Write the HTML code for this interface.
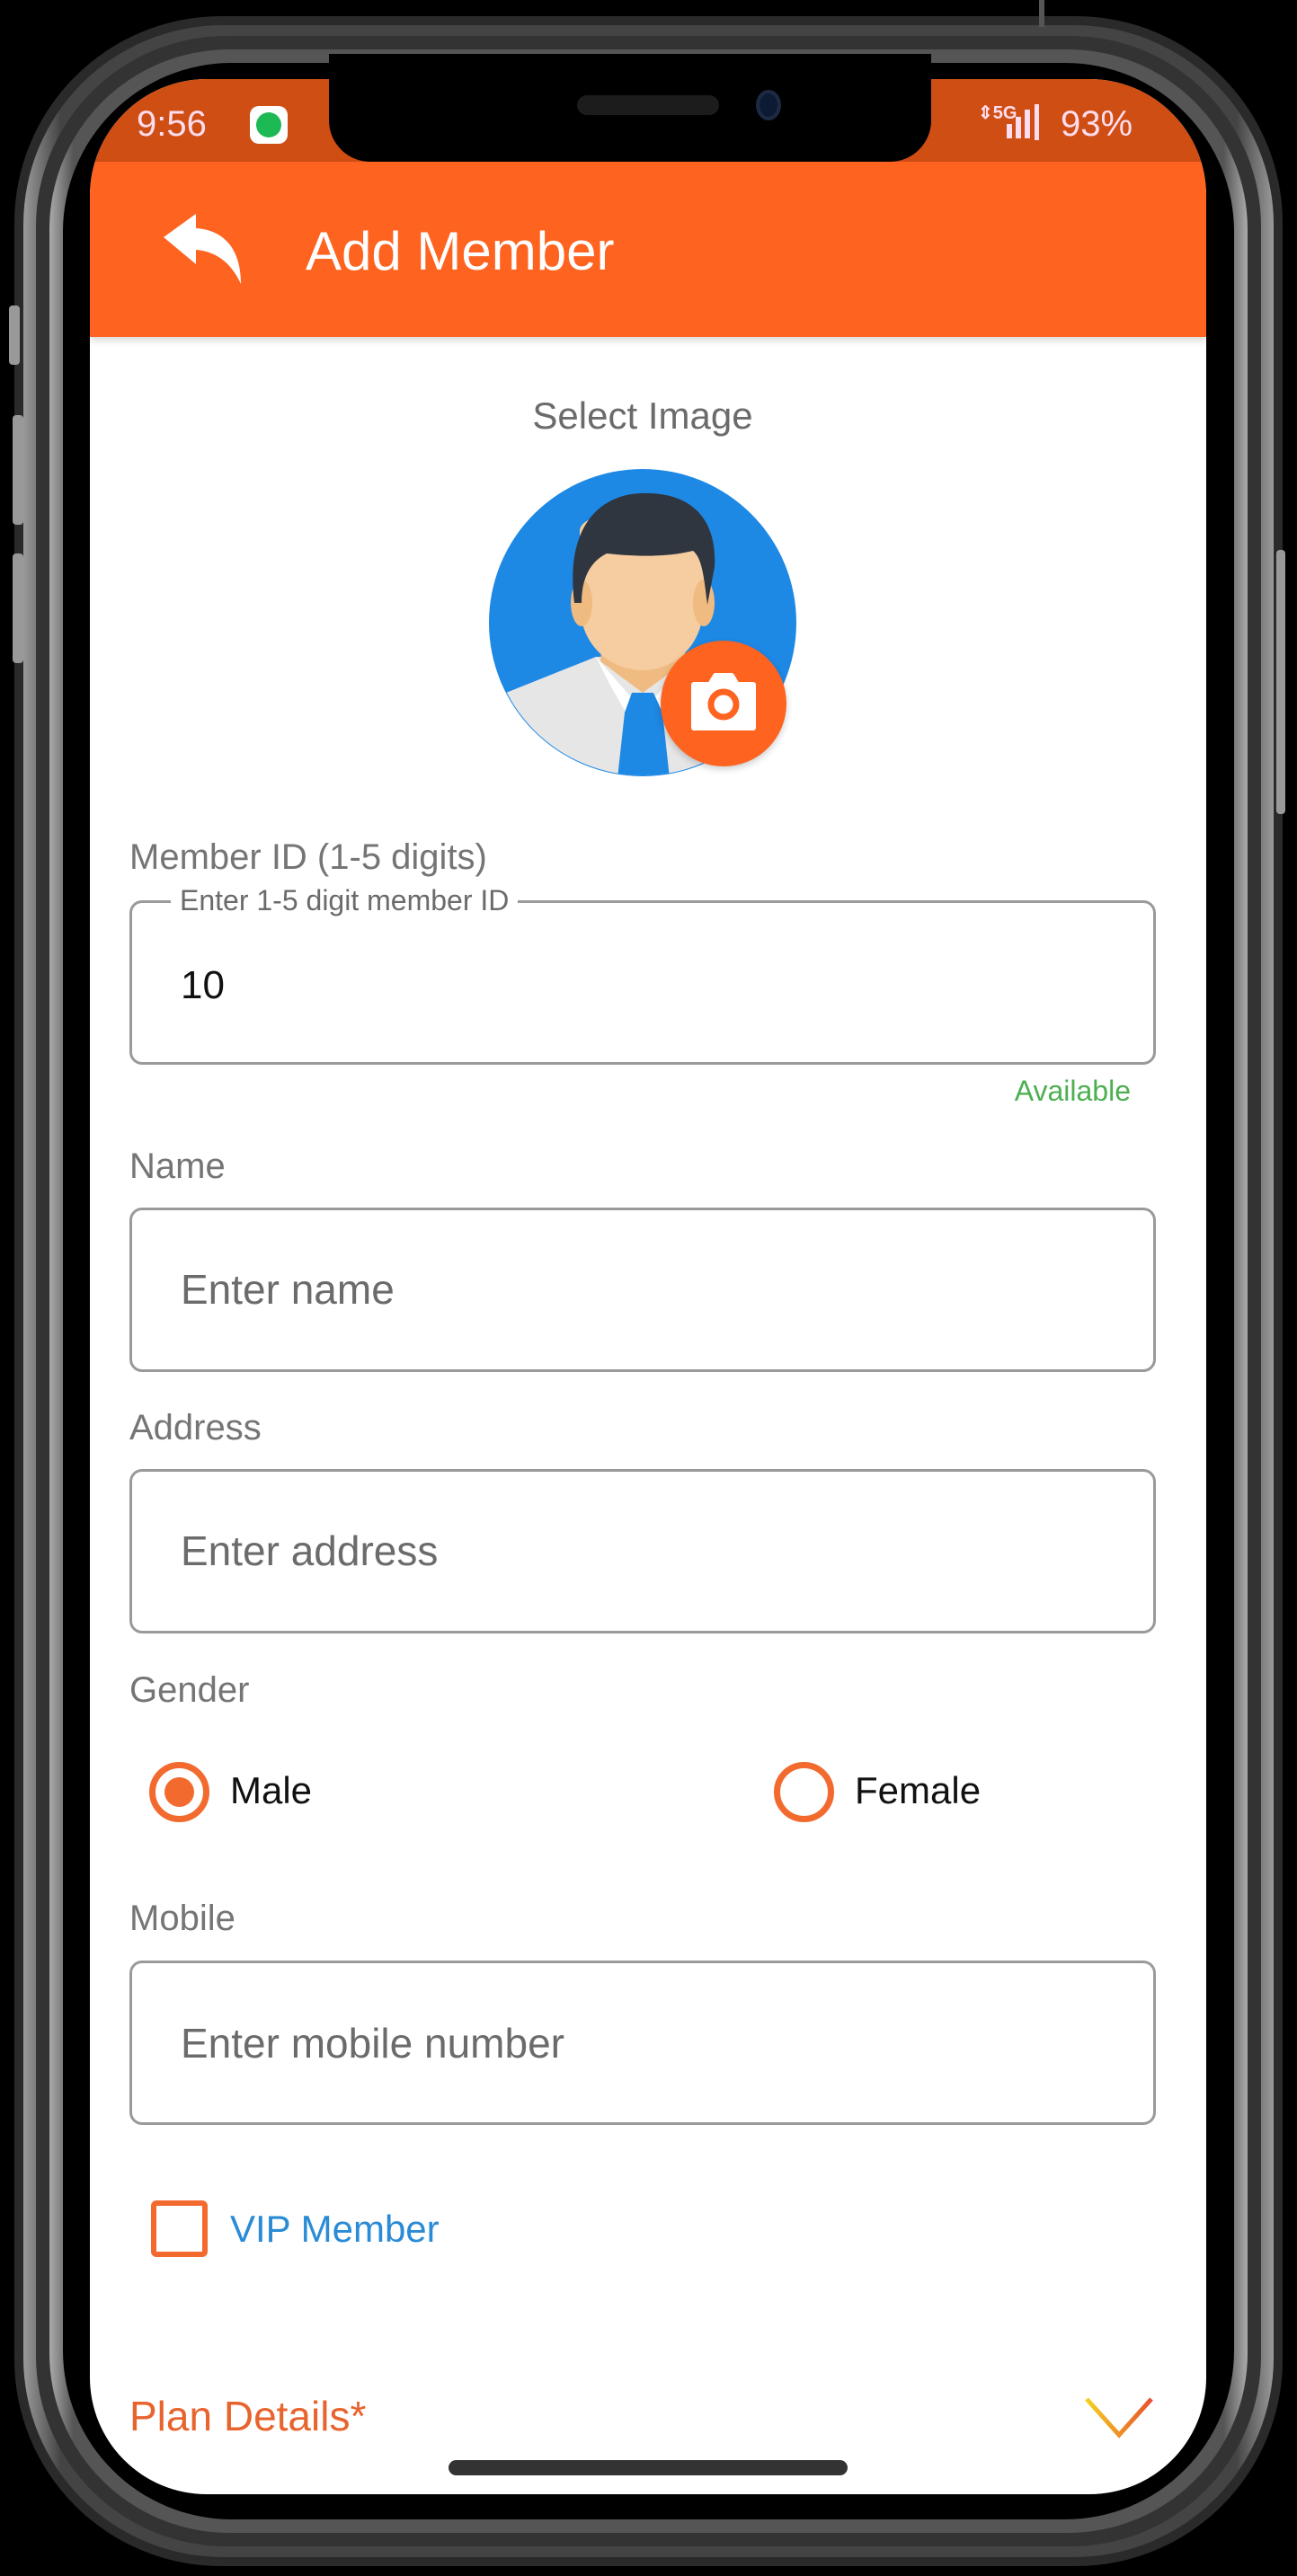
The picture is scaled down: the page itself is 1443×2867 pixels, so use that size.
<!DOCTYPE html>
<html><head><meta charset="utf-8"><style>
*{margin:0;padding:0;box-sizing:border-box}
html,body{width:1443px;height:2867px;background:#000;overflow:hidden;font-family:"Liberation Sans",Roboto,sans-serif}
.a{position:absolute}
.t{position:absolute;white-space:nowrap;line-height:1}
.box{position:absolute;left:144px;width:1142px;height:183px;border:3px solid #9a9a9a;border-radius:14px}
.lbl{color:#757575;font-size:40px;left:144px}
.ph{color:#6b6b6b;font-size:46px;left:201px}
</style></head><body>
<div class="a" style="left:16px;top:18px;width:1411px;height:2838px;border-radius:230px;background:#2a2a2a"></div>
<div class="a" style="left:26px;top:28px;width:1391px;height:2818px;border-radius:222px;background:linear-gradient(90deg,#9a9a9a,#444 3%,#444 97%,#9a9a9a)"></div>
<div class="a" style="left:40px;top:40px;width:1363px;height:2794px;border-radius:212px;background:#333"></div>
<div class="a" style="left:55px;top:55px;width:1333px;height:2764px;border-radius:200px;background:linear-gradient(90deg,#aaa,#555 2%,#555 98%,#aaa)"></div>
<div class="a" style="left:70px;top:70px;width:1303px;height:2734px;border-radius:188px;background:#000"></div>
<div class="a" style="left:10px;top:340px;width:12px;height:66px;border-radius:4px;background:#999"></div>
<div class="a" style="left:14px;top:462px;width:12px;height:122px;border-radius:4px;background:#999"></div>
<div class="a" style="left:14px;top:616px;width:12px;height:122px;border-radius:4px;background:#999"></div>
<div class="a" style="left:1420px;top:612px;width:10px;height:294px;border-radius:4px;background:#999"></div>
<div class="a" style="left:1156px;top:0;width:6px;height:30px;background:#555"></div>
<div class="a" style="left:100px;top:88px;width:1242px;height:2688px;border-radius:130px;background:#fff;overflow:hidden">
  <div class="a" style="left:0;top:0;width:1242px;height:92px;background:#cf4e14"></div>
  <div class="a" style="left:0;top:92px;width:1242px;height:195px;background:#fe6320;box-shadow:0 4px 8px rgba(0,0,0,.15)"></div>
</div>
<div class="a" style="left:366px;top:60px;width:670px;height:120px;background:#000;border-radius:0 0 46px 46px"></div>
<div class="a" style="left:642px;top:106px;width:158px;height:22px;border-radius:11px;background:#1c1c1c"></div>
<div class="a" style="left:841px;top:100px;width:28px;height:34px;border-radius:50%;background:#0d1a33;border:4px solid #1d2a44"></div>
<div class="t" style="left:152px;top:118px;font-size:40px;color:#fde">9:56</div>
<div class="a" style="left:278px;top:118px;width:42px;height:42px;border-radius:10px;background:#fff"><div class="a" style="left:7px;top:7px;width:28px;height:28px;border-radius:50%;background:#1db954"></div></div>
<div class="t" style="left:1088px;top:116px;font-size:20px;color:#fde;font-weight:bold">⇕5G</div>
<div class="a" style="left:1120px;top:138px;width:6px;height:16px;background:#fde"></div>
<div class="a" style="left:1130px;top:130px;width:6px;height:24px;background:#fde"></div>
<div class="a" style="left:1140px;top:122px;width:6px;height:32px;background:#fde"></div>
<div class="a" style="left:1151px;top:116px;width:5px;height:40px;background:#fde"></div>
<div class="t" style="left:1180px;top:118px;font-size:40px;color:#fde">93%</div>
<svg class="a" style="left:180px;top:238px" width="95" height="80" viewBox="0 0 95 80"><path d="M2 26 L38 0 L38 16 C70 18 88 40 88 78 C78 56 62 42 38 40 L38 56 Z" fill="#fff"/></svg>
<div class="t" style="left:340px;top:250px;font-size:60px;color:#fff">Add Member</div>
<div class="t" style="left:0;width:1430px;text-align:center;top:442px;font-size:42px;color:#6b6b6b">Select Image</div>
<svg class="a" style="left:543px;top:521px" width="345" height="345" viewBox="0 0 345 345">
<defs><clipPath id="c"><circle cx="172" cy="172" r="170"/></clipPath></defs>
<circle cx="172" cy="172" r="171" fill="#1e88e5"/>
<g clip-path="url(#c)">
<path d="M20 250 L120 210 L225 210 L330 250 L345 345 L0 345 Z" fill="#e6e6e6"/>
<path d="M120 210 L172 270 L225 210 L215 240 L175 310 L135 240Z" fill="#fff"/>
<path d="M130 160 L215 160 L220 215 L172 250 L125 215 Z" fill="#f0bb80"/>
<path d="M160 250 L184 250 L194 272 L202 345 L144 345 L152 272 Z" fill="#1e88e5"/>
</g>
<path d="M102 70 C102 40 240 40 240 70 L240 150 C240 200 205 225 172 225 C139 225 102 200 102 150 Z" fill="#f6cda0"/>
<ellipse cx="104" cy="150" rx="12" ry="26" fill="#f0bb80"/><ellipse cx="240" cy="150" rx="12" ry="26" fill="#f0bb80"/>
<path d="M96 150 C86 70 120 30 170 28 C225 26 255 55 252 110 L244 152 C240 120 238 100 228 92 C195 100 160 98 132 95 C112 105 104 125 104 150 Z" fill="#2f3640"/>
</svg>
<div class="a" style="left:735px;top:713px;width:140px;height:140px;border-radius:50%;background:#fe6320;box-shadow:0 3px 8px rgba(0,0,0,.2)"></div>
<svg class="a" style="left:768px;top:748px" width="74" height="66" viewBox="0 0 74 66"><path d="M4 14 H22 L28 4 H46 L52 14 H70 V62 H4 Z" fill="#fff" stroke="#fff" stroke-width="6" stroke-linejoin="round"/><circle cx="37" cy="36" r="14" fill="none" stroke="#fe6320" stroke-width="7"/></svg>
<div class="t lbl" style="top:934px">Member ID (1-5 digits)</div>
<div class="box" style="top:1002px"></div>
<div class="t" style="left:190px;top:986px;font-size:32px;color:#6b6b6b;background:#fff;padding:0 10px">Enter 1-5 digit member ID</div>
<div class="t" style="left:201px;top:1075px;font-size:44px;color:#111">10</div>
<div class="t" style="right:185px;top:1198px;font-size:32px;color:#4caf50">Available</div>
<div class="t lbl" style="top:1278px">Name</div>
<div class="box" style="top:1344px"></div>
<div class="t ph" style="top:1412px">Enter name</div>
<div class="t lbl" style="top:1569px">Address</div>
<div class="box" style="top:1635px"></div>
<div class="t ph" style="top:1703px">Enter address</div>
<div class="t lbl" style="top:1861px">Gender</div>
<div class="a" style="left:166px;top:1961px;width:67px;height:67px;border-radius:50%;border:7px solid #f26a2e"></div>
<div class="a" style="left:183px;top:1978px;width:33px;height:33px;border-radius:50%;background:#f26a2e"></div>
<div class="t" style="left:256px;top:1972px;font-size:42px;color:#111">Male</div>
<div class="a" style="left:861px;top:1961px;width:67px;height:67px;border-radius:50%;border:7px solid #f26a2e"></div>
<div class="t" style="left:951px;top:1972px;font-size:42px;color:#111">Female</div>
<div class="t lbl" style="top:2115px">Mobile</div>
<div class="box" style="top:2182px"></div>
<div class="t ph" style="top:2251px">Enter mobile number</div>
<div class="a" style="left:168px;top:2449px;width:63px;height:63px;border-radius:6px;border:6px solid #f26a2e"></div>
<div class="t" style="left:256px;top:2460px;font-size:42px;color:#2a8bd6">VIP Member</div>
<div class="t" style="left:144px;top:2666px;font-size:46px;color:#e8642e">Plan Details*</div>
<svg class="a" style="left:1205px;top:2664px" width="80" height="52" viewBox="0 0 80 52"><defs><linearGradient id="g" x1="0" x2="1"><stop offset="0" stop-color="#f5d020"/><stop offset="1" stop-color="#e8502e"/></linearGradient></defs><path d="M4 6 L40 46 L76 6" fill="none" stroke="url(#g)" stroke-width="5"/></svg>
<div class="a" style="left:499px;top:2738px;width:444px;height:17px;border-radius:9px;background:#333"></div>
</body></html>
